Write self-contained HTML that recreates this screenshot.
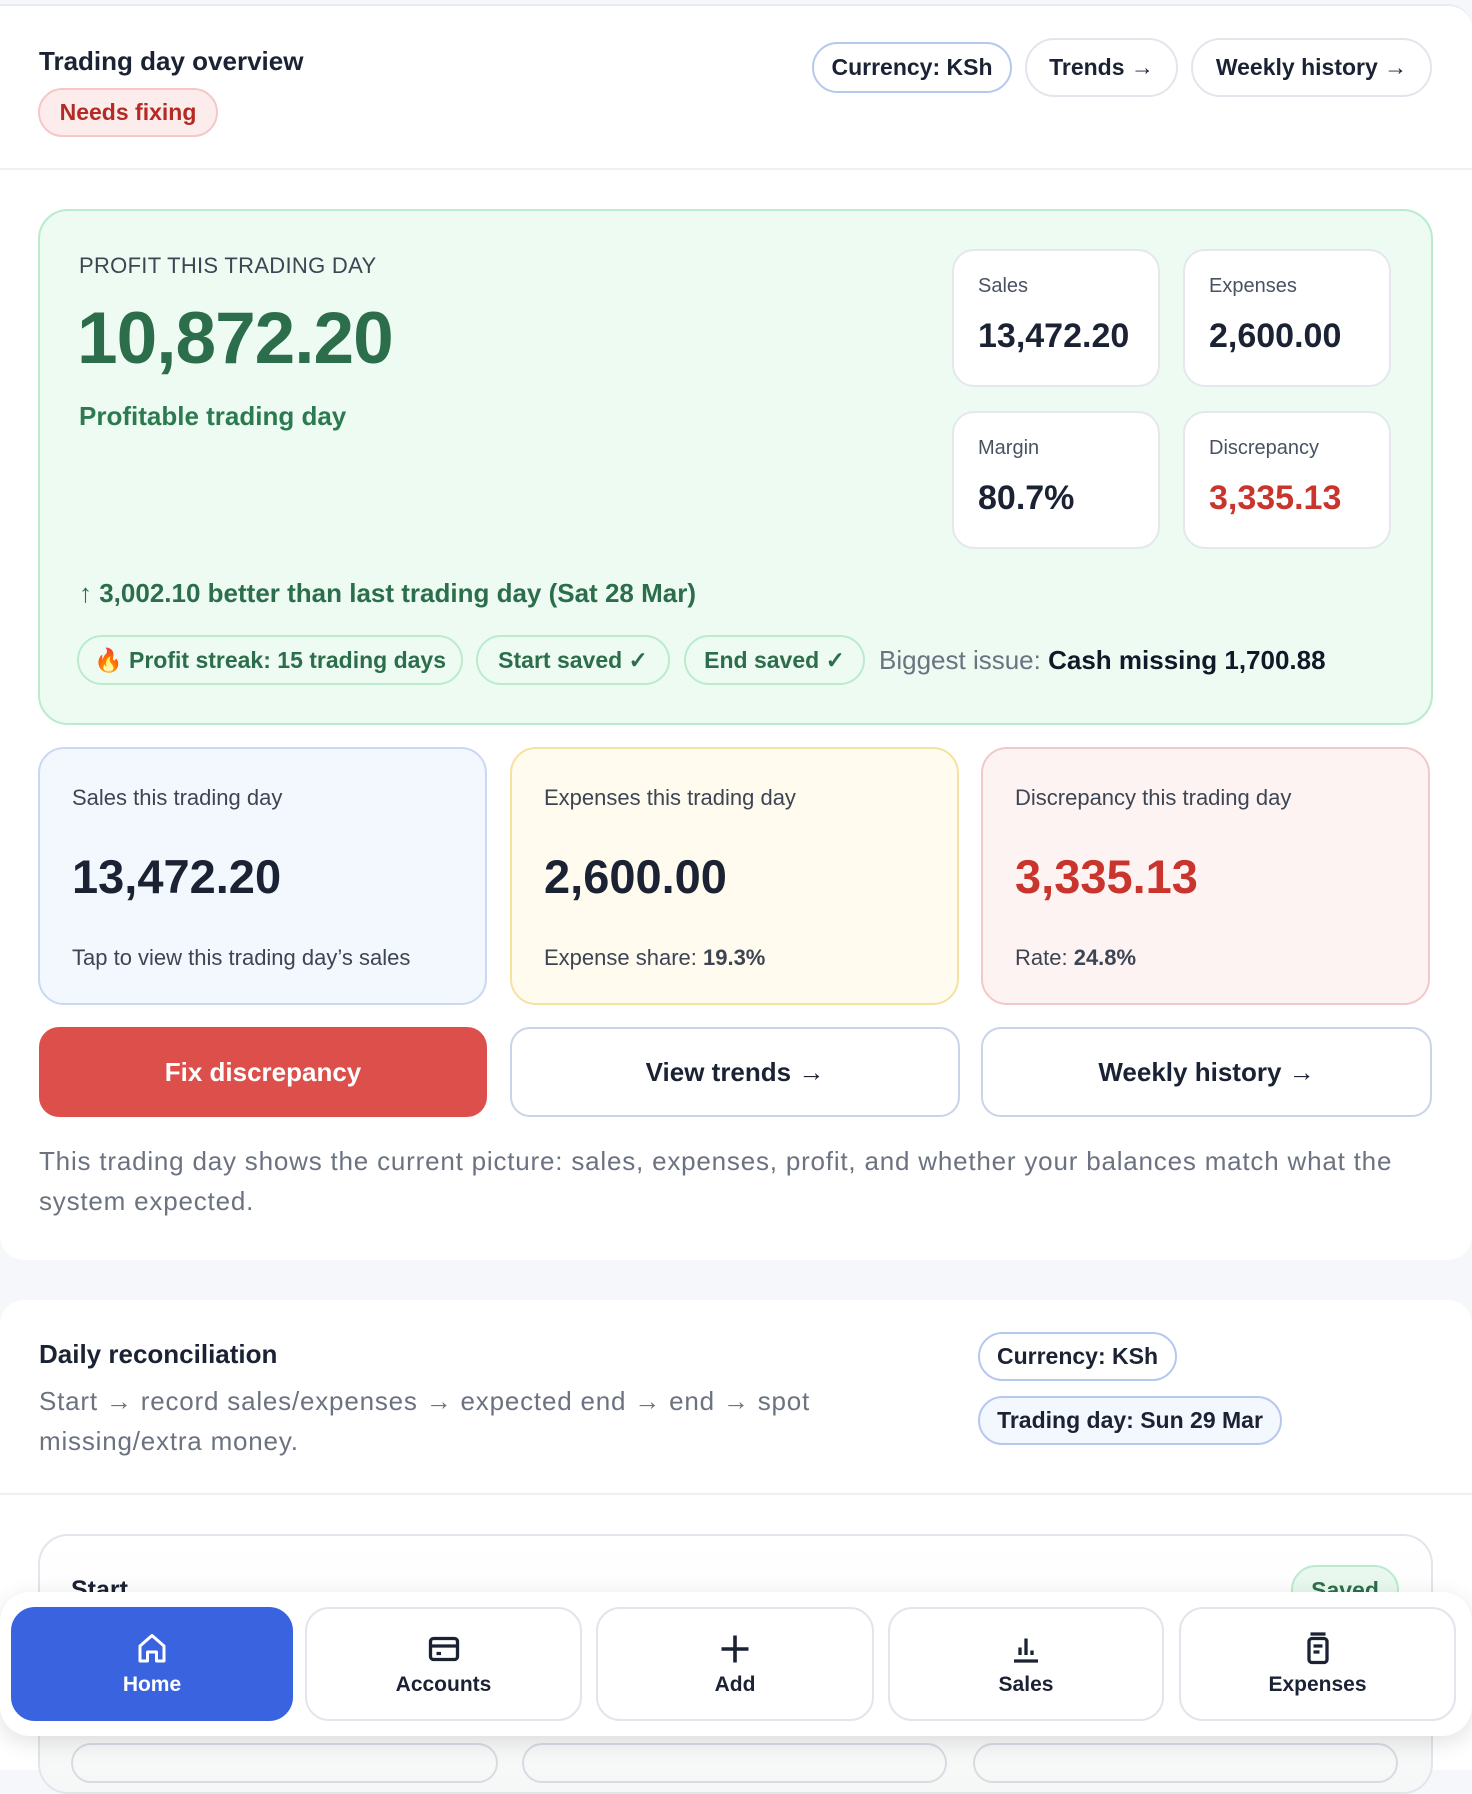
<!DOCTYPE html>
<html><head><meta charset="utf-8"><style>
*{box-sizing:border-box;margin:0;padding:0}
body{width:1472px;height:1760px;overflow:hidden;background:#f5f7fa;font-family:"Liberation Sans",sans-serif;color:#1a2233;position:relative}
.abs{position:absolute}
.pill{position:absolute;border:2px solid #e2e6ec;border-radius:30px;background:#fff;font-size:23px;font-weight:600;display:flex;align-items:center;justify-content:center;color:#1a2233}
.card1{position:absolute;left:0;top:4px;width:1472px;height:1256px;background:#fff;border-radius:0 24px 24px 24px;border-top:2px solid #e8ecf2}
.green{position:absolute;left:38px;top:209px;width:1395px;height:516px;background:#edfbf3;border:2px solid #b9ebcc;border-radius:30px}
.sc{position:absolute;width:208px;height:138px;background:#fff;border:2px solid #e3e8ee;border-radius:22px}
.sc .l{position:absolute;left:24px;top:24px;font-size:20px;color:#4a5262}
.sc .v{position:absolute;left:24px;top:66px;font-size:34px;font-weight:600;color:#1a2233}
.gp{position:absolute;top:635px;height:50px;border:2px solid #b9ebcc;border-radius:26px;background:#eefbf3;color:#2c6e4b;font-size:23px;font-weight:600;display:flex;align-items:center;justify-content:center}
.tc{position:absolute;top:747px;width:449px;height:258px;border-radius:26px;border:2px solid}
.tc .l{position:absolute;left:32px;top:36px;font-size:22px;color:#3d4553}
.tc .v{position:absolute;left:32px;top:100px;font-size:47px;font-weight:700;color:#1a2233}
.tc .s{position:absolute;left:32px;top:196px;font-size:22px;color:#3d4553}
.btn{position:absolute;top:1027px;height:90px;border-radius:20px;display:flex;align-items:center;justify-content:center;font-size:26px;font-weight:700}
.nb{position:absolute;top:1607px;height:114px;border:2px solid #e2e6ec;border-radius:24px;background:#fff;display:flex;flex-direction:column;align-items:center;justify-content:center;font-size:21px;font-weight:600;color:#1a2233}
.nb svg{margin-bottom:6px}
.para{font-size:26px;letter-spacing:.8px;line-height:40px;color:#6b7280}
</style></head><body>
<div class="card1"></div>
<div class="abs" style="left:39px;top:46px;font-size:26px;font-weight:600">Trading day overview</div>
<div class="pill" style="left:38px;top:88px;width:180px;height:49px;background:#fdecec;border-color:#f6c7c7;color:#b42a24">Needs fixing</div>
<div class="pill" style="left:812px;top:42px;width:200px;height:51px;border-color:#b6c8ee">Currency: KSh</div>
<div class="pill" style="left:1025px;top:38px;width:153px;height:59px">Trends →</div>
<div class="pill" style="left:1191px;top:38px;width:241px;height:59px">Weekly history →</div>
<div class="abs" style="left:0;top:168px;width:1472px;height:2px;background:#eef1f4"></div>

<div class="green"></div>
<div class="abs" style="left:79px;top:253px;font-size:22px;color:#3d4553;font-weight:500;letter-spacing:.3px">PROFIT THIS TRADING DAY</div>
<div class="abs" style="left:77px;top:297px;font-size:73px;font-weight:700;color:#2c6e4b;letter-spacing:-1px">10,872.20</div>
<div class="abs" style="left:79px;top:401px;font-size:26px;font-weight:600;color:#2c7a50">Profitable trading day</div>
<div class="sc" style="left:952px;top:249px"><div class="l">Sales</div><div class="v">13,472.20</div></div>
<div class="sc" style="left:1183px;top:249px"><div class="l">Expenses</div><div class="v">2,600.00</div></div>
<div class="sc" style="left:952px;top:411px"><div class="l">Margin</div><div class="v">80.7%</div></div>
<div class="sc" style="left:1183px;top:411px"><div class="l">Discrepancy</div><div class="v" style="color:#c9342d">3,335.13</div></div>
<div class="abs" style="left:79px;top:578px;font-size:26px;font-weight:600;color:#2c6e4b">↑ 3,002.10 better than last trading day (Sat 28 Mar)</div>
<div class="gp" style="left:77px;width:386px">🔥 Profit streak: 15 trading days</div>
<div class="gp" style="left:476px;width:194px">Start saved ✓</div>
<div class="gp" style="left:684px;width:181px">End saved ✓</div>
<div class="abs" style="left:879px;top:645px;font-size:26px;color:#6b7280">Biggest issue: <b style="color:#111827;font-weight:600">Cash missing 1,700.88</b></div>

<div class="tc" style="left:38px;background:#f3f7fe;border-color:#c9d8f3"><div class="l">Sales this trading day</div><div class="v">13,472.20</div><div class="s">Tap to view this trading day’s sales</div></div>
<div class="tc" style="left:510px;background:#fffbee;border-color:#f5e1a0"><div class="l">Expenses this trading day</div><div class="v">2,600.00</div><div class="s">Expense share: <b>19.3%</b></div></div>
<div class="tc" style="left:981px;background:#fdf3f3;border-color:#f2c9c9"><div class="l">Discrepancy this trading day</div><div class="v" style="color:#c9342d">3,335.13</div><div class="s">Rate: <b>24.8%</b></div></div>

<div class="btn" style="left:39px;width:448px;background:#dd4f4a;color:#fff">Fix discrepancy</div>
<div class="btn" style="left:510px;width:450px;background:#fff;border:2px solid #c9d4ea">View trends →</div>
<div class="btn" style="left:981px;width:451px;background:#fff;border:2px solid #c9d4ea">Weekly history →</div>
<div class="abs para" style="left:39px;top:1141px;width:1400px">This trading day shows the current picture: sales, expenses, profit, and whether your balances match what the system expected.</div>

<div class="abs" style="left:0;top:1300px;width:1472px;height:470px;background:#fff;border-radius:24px 24px 0 0"></div>
<div class="abs" style="left:39px;top:1339px;font-size:26px;font-weight:600">Daily reconciliation</div>
<div class="abs para" style="left:39px;top:1381px;width:830px">Start → record sales/expenses → expected end → end → spot missing/extra money.</div>
<div class="pill" style="left:978px;top:1332px;width:199px;height:49px;border-color:#b6c8ee">Currency: KSh</div>
<div class="pill" style="left:978px;top:1396px;width:304px;height:49px;border-color:#b6c8ee;background:#f3f7fe">Trading day: Sun 29 Mar</div>
<div class="abs" style="left:0;top:1493px;width:1472px;height:2px;background:#eef1f4"></div>
<div class="abs" style="left:38px;top:1534px;width:1395px;height:260px;border:2px solid #e2e6ec;border-radius:30px;background:linear-gradient(#fff,#f6f8f7)"></div>
<div class="abs" style="left:71px;top:1576px;font-size:25px;font-weight:700">Start</div>
<div class="pill" style="left:1291px;top:1565px;width:108px;height:50px;background:#e8f8ee;border-color:#b9ebcc;color:#2c6e4b">Saved</div>
<div class="abs" style="left:71px;top:1743px;width:427px;height:40px;border:2px solid #d7dce3;border-radius:20px"></div>
<div class="abs" style="left:522px;top:1743px;width:425px;height:40px;border:2px solid #d7dce3;border-radius:20px"></div>
<div class="abs" style="left:973px;top:1743px;width:425px;height:40px;border:2px solid #d7dce3;border-radius:20px"></div>

<div class="abs" style="left:0;top:1592px;width:1472px;height:144px;background:#fff;border-radius:30px;box-shadow:0 6px 24px rgba(0,0,0,.12)"></div>
<div class="nb" style="left:11px;width:282px;background:#3a63e0;border-color:#3a63e0;color:#fff">
<svg width="36" height="36" viewBox="0 0 24 24" fill="none" stroke="#fff" stroke-width="2" stroke-linejoin="round"><path d="M4 10l8-7 8 7v10h-5v-6h-6v6H4z"/></svg>Home</div>
<div class="nb" style="left:305px;width:277px">
<svg width="36" height="36" viewBox="0 0 24 24" fill="none" stroke="#1a2233" stroke-width="2.2"><rect x="3" y="5" width="18" height="14" rx="2"/><path d="M3 10h18M7 15h3"/></svg>Accounts</div>
<div class="nb" style="left:596px;width:278px">
<svg width="36" height="36" viewBox="0 0 24 24" fill="none" stroke="#1a2233" stroke-width="2.4"><path d="M12 3v18M3 12h18"/></svg>Add</div>
<div class="nb" style="left:888px;width:276px">
<svg width="36" height="36" viewBox="0 0 24 24" fill="none" stroke="#1a2233" stroke-width="2.2"><path d="M4 20h16M8 16v-5M12 16V5M16 16v-3"/></svg>Sales</div>
<div class="nb" style="left:1179px;width:277px">
<svg width="36" height="36" viewBox="0 0 24 24" fill="none" stroke="#1a2233" stroke-width="2.2"><rect x="6" y="5" width="12" height="16" rx="2"/><path d="M7 2h10M9 10h6M9 14h4"/></svg>Expenses</div>
</body></html>
